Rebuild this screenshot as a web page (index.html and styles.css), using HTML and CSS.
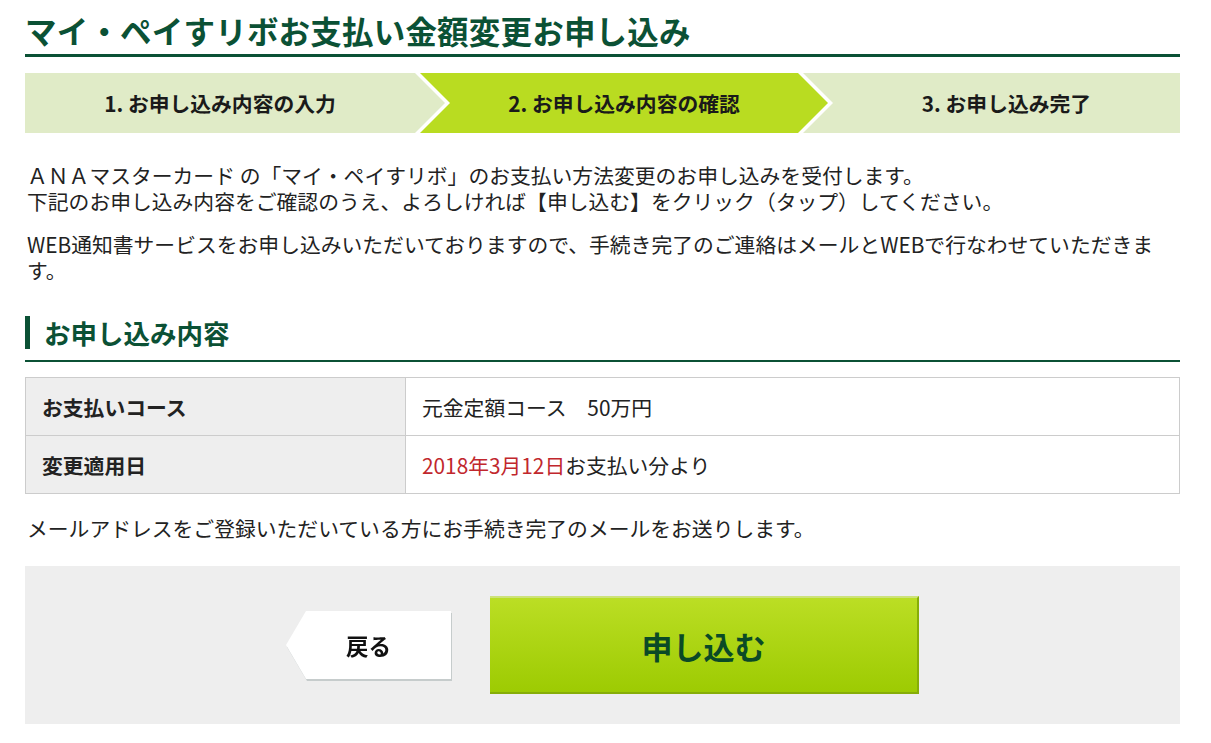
FILE: index.html
```html
<!DOCTYPE html>
<html lang="ja">
<head>
<meta charset="utf-8">
<title>マイ・ペイすリボお支払い金額変更お申し込み</title>
<link rel="stylesheet" href="styles.css">
</head>
<body>
<div class="page">
  <h1 class="page-title">マイ・ペイすリボお支払い金額変更お申し込み</h1>

  <ol class="steps">
    <li class="step step-first">1. お申し込み内容の入力</li>
    <li class="step step-mid step-current">2. お申し込み内容の確認</li>
    <li class="step step-last">3. お申し込み完了</li>
  </ol>

  <p class="lead">ＡＮＡマスターカード の「マイ・ペイすリボ」のお支払い方法変更のお申し込みを受付します。<br>下記のお申し込み内容をご確認のうえ、よろしければ【申し込む】をクリック（タップ）してください。</p>
  <p class="lead lead-2">WEB通知書サービスをお申し込みいただいておりますので、手続き完了のご連絡はメールとWEBで行なわせていただきます。</p>

  <h2 class="section-title"><span class="section-title-text">お申し込み内容</span></h2>

  <table class="detail">
    <tr>
      <th>お支払いコース</th>
      <td>元金定額コース　50万円</td>
    </tr>
    <tr>
      <th>変更適用日</th>
      <td><span class="date">2018年3月12日</span>お支払い分より</td>
    </tr>
  </table>

  <p class="note">メールアドレスをご登録いただいている方にお手続き完了のメールをお送りします。</p>

  <div class="actions">
    <div class="back-wrap"><a class="btn-back" href="#">戻る</a></div>
    <a class="btn-submit" href="#">申し込む</a>
  </div>
</div>
</body>
</html>
```

FILE: styles.css
```css
* { box-sizing: border-box; }

html, body {
  margin: 0;
  padding: 0;
  background: #ffffff;
}

body {
  font-family: "Noto Sans CJK JP", "Noto Sans", sans-serif;
  color: #222222;
  font-size: 20.8px;
}

.page {
  width: 1155px;
  margin-left: 25px;
}

.page-title {
  margin: 0;
  padding-top: 10px;
  padding-bottom: 4px;
  line-height: 40px;
  font-size: 31.5px;
  font-weight: bold;
  color: #0b5135;
  border-bottom: 3px solid #0b5135;
  letter-spacing: 0.2px;
}

.steps {
  list-style: none;
  margin: 16px 0 0;
  padding: 0;
  display: flex;
  height: 60px;
}

.step {
  height: 60px;
  display: flex;
  align-items: center;
  justify-content: center;
  font-size: 20.8px;
  font-weight: bold;
  color: #1a1a1a;
  background: #e0ebc7;
}

.step-current {
  background: #b9dc21;
}

.step-first {
  width: 420px;
  padding-right: 30px;
  clip-path: polygon(0 0, 390px 0, 420px 30px, 390px 60px, 0 60px);
}

.step-mid {
  width: 408px;
  margin-left: -25px;
  padding-left: 30px;
  padding-right: 30px;
  clip-path: polygon(0 0, 378px 0, 408px 30px, 378px 60px, 0 60px, 30px 30px);
}

.step-last {
  flex: 1;
  margin-left: -25px;
  padding-left: 30px;
  clip-path: polygon(0 0, 100% 0, 100% 100%, 0 100%, 30px 30px);
}

.lead {
  margin: 29px 0 0;
  line-height: 26px;
  padding-left: 2px;
}

.lead-2 {
  margin-top: 17px;
}

.section-title {
  margin: 33px 0 0;
  padding-bottom: 11px;
  border-bottom: 2px solid #0b5135;
  font-size: 26.5px;
  font-weight: bold;
  color: #0b5135;
}

.section-title-text {
  display: block;
  line-height: 33px;
  border-left: 5px solid #0b5135;
  padding-left: 14px;
}

.detail {
  margin-top: 15px;
  width: 100%;
  border-collapse: collapse;
  border: 1px solid #cccccc;
}

.detail th,
.detail td {
  height: 58px;
  padding: 0 16px;
  text-align: left;
  vertical-align: middle;
  border: 1px solid #cccccc;
  font-size: 20.8px;
}

.detail th {
  width: 380px;
  background: #eeeeee;
  font-weight: bold;
}

.date {
  color: #c1272d;
}

.note {
  margin: 21px 0 0;
  line-height: 26px;
  padding-left: 2px;
}

.actions {
  margin-top: 25px;
  background: #eeeeee;
  height: 158px;
  display: flex;
  align-items: center;
  justify-content: center;
  gap: 39px;
}

.back-wrap {
  filter: drop-shadow(1px 2px 0 #c6cccc);
}

.btn-back {
  display: flex;
  align-items: center;
  justify-content: center;
  width: 165px;
  height: 68px;
  background: #ffffff;
  color: #111111;
  text-decoration: none;
  font-size: 22.5px;
  font-weight: bold;
  clip-path: polygon(20px 0, 100% 0, 100% 100%, 20px 100%, 0 50%);
}

.btn-submit {
  display: flex;
  align-items: center;
  justify-content: center;
  width: 429px;
  height: 98px;
  background: linear-gradient(#bbde24, #9dcb02);
  border-top: 2px solid #cde27a;
  border-right: 2px solid #86ad08;
  border-bottom: 2px solid #86ad08;
  color: #0a4a26;
  text-decoration: none;
  font-size: 31px;
  font-weight: bold;
}
```
